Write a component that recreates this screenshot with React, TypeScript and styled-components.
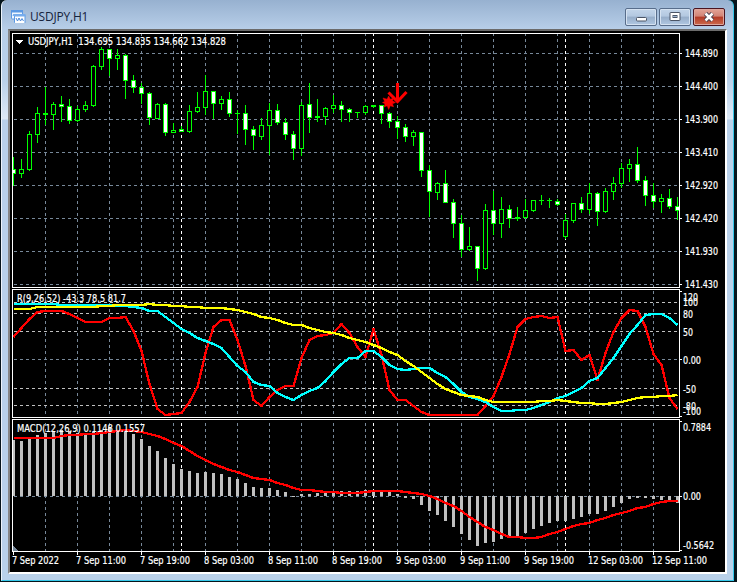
import React from "react";
import styled, { createGlobalStyle } from "styled-components";

const GlobalStyle = createGlobalStyle`
  * { box-sizing: border-box; }
  body { margin: 0; background: #000; overflow: hidden; }
`;

const UI_FONT = '"DejaVu Sans Condensed", "DejaVu Sans", sans-serif';

const Window = styled.div`
  width: 737px;
  height: 582px;
  display: flex;
  flex-direction: column;
  padding: 0 3px 1px 1px;
  background: #06151c;
`;

const Frame = styled.div`
  flex: 1;
  display: flex;
  flex-direction: column;
  padding: 0 6px 6px;
  border-left: 1px solid #eef4fb;
  border-right: 1px solid #35c8ea;
  border-bottom: 1px solid #35c8ea;
  border-radius: 6px 6px 0 0;
  background: linear-gradient(#97b1d0 0, #b7cee8 29px, #b9d1ea 80px, #dde9f6 119px, #b9d1ea 120px);
`;

const TitleBar = styled.header`
  height: 29px;
  display: flex;
  align-items: flex-start;
  padding: 8px 2px 0 3px;
`;

const Title = styled.h1`
  flex: 1;
  margin: 1px 0 0 4px;
  font: 400 12px/16px "Open Sans", "Noto Sans", sans-serif;
  letter-spacing: -0.2px;
  color: #16233c;
`;

const Buttons = styled.div`
  display: flex;
  gap: 2px;
`;

const WindowButton = styled.button<{ $close?: boolean }>`
  width: 32px;
  height: 18px;
  display: flex;
  align-items: center;
  justify-content: center;
  padding: 0;
  border-radius: 2px;
  border: 1px solid ${(p) => (p.$close ? "#4a1420" : "#586d8b")};
  box-shadow: inset 0 0 0 1px ${(p) => (p.$close ? "#dda69d" : "#d5e2f1")};
  background: ${(p) =>
    p.$close
      ? "linear-gradient(#e3a497 0, #d28476 45%, #b33a26 50%, #cc6a4d 100%)"
      : "linear-gradient(#c3d5ea 0, #b3c8e0 45%, #96adc9 50%, #b1c8e2 100%)"};
`;

const Client = styled.main`
  flex: 1;
  display: flex;
  flex-direction: column;
  background: #000;
  border: 2px solid;
  border-color: #6b6b6b #fff #fff #868686;
`;

const Pane = styled.svg<{ $h: number }>`
  display: block;
  width: 715px;
  height: ${(p) => p.$h}px;
  flex: none;
  overflow: visible;
  font-family: ${UI_FONT};
  font-size: 10.5px;
  fill: #fff;
`;

const Label = styled.text`
  stroke: #fff;
  stroke-width: 0.2px;
`;

const X0 = 13;
const STEP = 8;
const LIME = "#00ff00";
const SLATE = "#778899";
const SILVER = "#c0c0c0";
const barX = (i: number) => X0 + STEP * i;

type Kind = "w" | "h";
type Candle = [number, number, number, number, Kind];

/* high, low, body top, body bottom, white or hollow body */
const candles: Candle[] = [
  [157, 185, 169, 173, "w"], [159, 177, 169, 173, "h"], [131, 170, 134, 169, "h"], [107, 142, 113, 134, "h"],
  [87, 124, 113, 114, "h"], [102, 129, 104, 114, "h"], [96, 121, 104, 106, "w"], [99, 123, 106, 120, "w"],
  [106, 121, 109, 120, "h"], [101, 111, 105, 109, "h"], [65, 106, 66, 105, "h"], [47, 69, 49, 66, "h"],
  [49, 75, 49, 58, "w"], [49, 69, 55, 58, "h"], [54, 98, 55, 80, "w"], [75, 92, 80, 87, "w"],
  [83, 103, 87, 93, "w"], [92, 124, 93, 117, "w"], [103, 118, 104, 118, "h"], [103, 135, 104, 132, "w"],
  [123, 132, 130, 132, "h"], [126, 131, 129, 131, "w"], [105, 132, 111, 131, "h"], [92, 112, 107, 111, "h"],
  [75, 114, 91, 107, "h"], [91, 118, 91, 103, "w"], [96, 109, 99, 103, "h"], [92, 116, 99, 113, "w"],
  [110, 133, 113, 113, "h"], [105, 144, 113, 129, "w"], [126, 149, 129, 135, "w"], [118, 139, 125, 136, "h"],
  [103, 154, 110, 125, "h"], [104, 124, 110, 122, "w"], [118, 139, 122, 134, "w"], [131, 159, 134, 148, "w"],
  [102, 155, 105, 148, "h"], [83, 132, 104, 117, "w"], [99, 121, 116, 117, "h"], [107, 124, 108, 116, "h"],
  [95, 112, 105, 108, "h"], [101, 121, 105, 109, "w"], [108, 121, 109, 112, "w"], [112, 117, 112, 112, "h"],
  [105, 114, 106, 112, "h"], [105, 107, 105, 106, "h"], [105, 123, 105, 113, "w"], [112, 127, 113, 121, "w"],
  [116, 138, 121, 127, "w"], [124, 141, 127, 136, "w"], [130, 145, 132, 136, "h"], [132, 176, 132, 170, "w"],
  [165, 216, 170, 191, "w"], [182, 199, 183, 192, "h"], [170, 202, 183, 202, "w"], [199, 237, 202, 223, "w"],
  [215, 256, 223, 249, "w"], [227, 250, 246, 249, "h"], [246, 280, 246, 268, "w"], [204, 269, 210, 268, "h"],
  [191, 234, 210, 223, "w"], [197, 237, 209, 223, "h"], [205, 227, 209, 218, "w"], [207, 220, 217, 218, "h"],
  [199, 218, 210, 217, "h"], [200, 211, 200, 210, "h"], [195, 204, 200, 200, "h"], [198, 207, 200, 200, "h"],
  [199, 205, 201, 204, "w"], [214, 238, 220, 236, "h"], [203, 222, 203, 220, "h"], [197, 212, 203, 209, "w"],
  [183, 213, 193, 209, "h"], [192, 225, 193, 211, "w"], [188, 212, 191, 211, "h"], [177, 199, 183, 191, "h"],
  [163, 187, 168, 183, "h"], [159, 181, 164, 168, "h"], [147, 182, 164, 180, "w"], [176, 205, 180, 195, "w"],
  [183, 207, 195, 201, "w"], [194, 212, 198, 201, "h"], [189, 208, 198, 206, "w"], [197, 219, 206, 210, "w"],
];

/* indicator series, in thirds of a pixel below the origin of their pane */
const fast = [
  157, 130, 103, 80, 77, 77, 78, 88, 100, 110, 110, 110, 100, 98, 96, 137, 197, 297, 373, 389, 388, 384, 351, 306,
  203, 127, 106, 104, 165, 244, 344, 362, 337, 314, 303, 302, 220, 166, 153, 149, 145, 116, 144, 185, 215, 131, 210,
  314, 345, 345, 364, 382, 390, 390, 390, 390, 390, 390, 390, 362, 333, 277, 207, 127, 101, 95, 92, 98, 96, 197, 194,
  224, 209, 284, 203, 142, 98, 75, 78, 127, 208, 240, 340, 373,
];
const middle = [
  57, 57, 57, 57, 57, 57, 59, 60, 60, 60, 60, 60, 60, 62, 63, 65, 68, 77, 79, 95, 113, 131, 145, 159, 168, 177, 190,
  216, 243, 262, 291, 301, 304, 324, 337, 345, 331, 319, 308, 289, 262, 237, 218, 220, 198, 198, 216, 241, 251, 255,
  252, 249, 249, 263, 276, 297, 320, 337, 343, 351, 367, 377, 377, 375, 375, 370, 361, 351, 340, 334, 322, 309, 289,
  278, 249, 219, 183, 147, 120, 91, 87, 87, 99, 120,
];
const slow = [
  72, 72, 72, 67, 66, 66, 66, 66, 66, 66, 66, 64, 62, 61, 60, 59, 59, 58, 59, 61, 62, 63, 65, 67, 68, 69, 70, 73, 76,
  82, 88, 95, 98, 104, 114, 119, 121, 130, 136, 142, 145, 151, 160, 166, 172, 179, 188, 200, 211, 227, 244, 262, 280,
  297, 312, 321, 330, 334, 336, 345, 350, 350, 350, 350, 350, 350, 348, 347, 346, 348, 350, 353, 355, 356, 356, 355,
  352, 346, 340, 337, 335, 333, 333, 330,
];
const signal = [
  84, 84, 84, 84, 84, 83, 79, 76, 74, 73, 71, 68, 65, 62, 61, 62, 65, 71, 77, 86, 98, 108, 124, 139, 151, 163, 172,
  181, 187, 196, 203, 206, 211, 218, 224, 233, 239, 241, 244, 246, 246, 248, 248, 248, 246, 243, 242, 242, 244, 247,
  250, 253, 259, 268, 278, 289, 304, 320, 335, 350, 361, 371, 380, 382, 384, 383, 380, 371, 365, 358, 349, 343, 338,
  331, 325, 315, 310, 304, 295, 290, 283, 277, 274, 272,
];
const histogram = [
  90, 93, 85, 75, 69, 64, 60, 64, 70, 70, 65, 60, 52, 62, 66, 72, 87, 108, 123, 144, 162, 177, 183, 189, 186, 189,
  192, 201, 207, 219, 231, 234, 234, 240, 246, 261, 252, 252, 249, 249, 249, 243, 243, 243, 240, 240, 243, 246, 252,
  264, 267, 285, 303, 315, 333, 351, 372, 390, 408, 399, 396, 387, 378, 378, 369, 357, 348, 339, 333, 333, 327, 321,
  312, 312, 303, 291, 279, 267, 264, 264, 267, 270, 273, 279,
];

const gridX = Array.from({ length: 20 }, (_, k) => 45 + 32 * k);
const dayX = [181, 373, 565];
const priceLevels = [
  "144.890", "144.400", "143.900", "143.410", "142.920", "142.420", "141.930", "141.430",
].map((label, i) => ({ label, y: 53 + 33 * i }));
const rLevels = [302, 313, 331, 388, 405];
const rLabels = [
  { label: "120", y: 297, w: 15 }, { label: "100", y: 302, w: 15 }, { label: "80", y: 314, w: 10 },
  { label: "50", y: 332, w: 10 }, { label: "0.00", y: 360, w: 18 }, { label: "-50", y: 389, w: 13 },
  { label: "-80", y: 406, w: 13 }, { label: "-100", y: 411, w: 18 },
];
const dates = [
  "7 Sep 2022", "7 Sep 11:00", "7 Sep 19:00", "8 Sep 03:00", "8 Sep 11:00", "8 Sep 19:00",
  "9 Sep 03:00", "9 Sep 11:00", "9 Sep 19:00", "12 Sep 03:00", "12 Sep 11:00",
];

const HLine = ({ y, color }: { y: number; color: string }) => (
  <line x1={14} x2={679} y1={y + 0.5} y2={y + 0.5} stroke={color} strokeDasharray="3 3" />
);

const Verticals = ({ top, bottom }: { top: number; bottom: number }) => (
  <>
    {gridX.map((x) => (
      <line key={x} x1={x + 0.5} x2={x + 0.5} y1={top} y2={bottom} stroke={SLATE} strokeDasharray="3 3" strokeDashoffset={top - 33} />
    ))}
    {dayX.map((x) => (
      <line key={x} x1={x + 0.5} x2={x + 0.5} y1={top} y2={bottom} stroke="#fff" strokeDasharray="3 3" strokeDashoffset={top - 33} />
    ))}
  </>
);

const Border = ({ top, bottom }: { top: number; bottom: number }) => (
  <rect x={12.5} y={top + 0.5} width={667} height={bottom - top} fill="none" stroke="#fff" />
);

const Series = ({ data, origin, color }: { data: number[]; origin: number; color: string }) => (
  <polyline
    points={data.map((v, i) => `${Math.min(barX(i) + 0.5, 678)},${origin + Math.round(v / 3)}`).join(" ")}
    fill="none"
    stroke={color}
    strokeWidth={2.35}
    strokeLinejoin="round"
  />
);

const AxisLabel = ({ x, y, w, children }: { x: number; y: number; w: number; children: string }) => (
  <Label x={x} y={y + 4} textLength={w} lengthAdjust="spacingAndGlyphs">{children}</Label>
);

function CandleShape({ index, candle }: { index: number; candle: Candle }) {
  const [high, low, top, bottom, kind] = candle;
  const x = barX(index);
  const left = Math.max(x - 2, 13);
  const right = Math.min(x + 3, 679);
  const inner = Math.max(x - 1, 13);
  return (
    <g>
      <rect x={x} y={high} width={1} height={low - high + 1} fill={LIME} />
      <rect x={left} y={top} width={right - left} height={bottom - top + 1} fill={LIME} />
      {bottom - top > 1 && (
        <rect x={inner} y={top + 1} width={Math.min(x + 2, 679) - inner} height={bottom - top - 1} fill={kind === "w" ? "#fff" : "#000"} />
      )}
    </g>
  );
}

function PricePane() {
  return (
    <Pane $h={257} viewBox="10 31 715 257">
      <g shapeRendering="crispEdges">
        <Verticals top={34} bottom={287} />
        {priceLevels.map((l) => <HLine key={l.y} y={l.y} color={SLATE} />)}
        {candles.map((c, i) => <CandleShape key={i} index={i} candle={c} />)}
        <Border top={33} bottom={287} />
        {priceLevels.map((l) => <rect key={l.y} x={680} y={l.y} width={2} height={1} />)}
        <path d="M16 40h7l-3.5 4z" />
      </g>
      <path d="M397.500 83v19M388.500 92.500l9 9 9-9.500" fill="none" stroke="red" strokeWidth={3} />
      <path d="M388.700 96l1.500 3.200 3.300-1-1 2.600 3 1.700-3 1.300 1 3-3.300-1-1.500 3.700-1.500-3.700-3.200 1.200 1-3.200-2.500-1.300 2.200-1-1.700-3.500 4 1.200z" fill="red" stroke="red" strokeWidth={0.5} />
      <AxisLabel x={28} y={41} w={198}>USDJPY,H1&#160; 134.695 134.835 134.662 134.828</AxisLabel>
      {priceLevels.map((l) => <AxisLabel key={l.y} x={685} y={l.y} w={33}>{l.label}</AxisLabel>)}
    </Pane>
  );
}

function OscillatorPane() {
  return (
    <Pane $h={130} viewBox="10 288 715 130">
      <g shapeRendering="crispEdges">
        <Verticals top={290} bottom={417} />
        {rLevels.map((y) => <HLine key={y} y={y} color={SILVER} />)}
        <HLine y={359} color={SLATE} />
        <Series data={fast} origin={285} color="red" />
        <Series data={middle} origin={285} color="cyan" />
        <Series data={slow} origin={285} color="yellow" />
        <Border top={289} bottom={417} />
        {[291, 359, 416].map((y) => <rect key={y} x={680} y={y} width={2} height={1} />)}
      </g>
      <AxisLabel x={17} y={298} w={109}>R(9,26,52) -43.3 78.5 81.7</AxisLabel>
      {rLabels.map((l) => <AxisLabel key={l.label} x={683} y={l.y} w={l.w}>{l.label}</AxisLabel>)}
    </Pane>
  );
}

function MacdPane() {
  return (
    <Pane $h={154} viewBox="10 418 715 154">
      <g shapeRendering="crispEdges">
        <Verticals top={420} bottom={551} />
        <HLine y={496} color={SLATE} />
        {histogram.map((v, i) => {
          const y = 410 + Math.round(v / 3);
          const left = Math.max(barX(i) - 1, 13);
          return (
            <rect key={i} x={left} y={Math.min(y, 496)} width={Math.min(barX(i) + 2, 679) - left} height={Math.abs(496 - y)} fill={SILVER} />
          );
        })}
        <Series data={signal} origin={410} color="red" />
        <path d="M13 546l5 5h-5z" fill={SLATE} />
        <Border top={419} bottom={551} />
        {[421, 496, 550].map((y) => <rect key={y} x={680} y={y} width={2} height={1} />)}
        {dates.map((d, i) => <rect key={d} x={barX(i * 8)} y={552} width={1} height={3} />)}
      </g>
      <AxisLabel x={17} y={428} w={128}>MACD(12,26,9) 0.1148 0.1557</AxisLabel>
      <AxisLabel x={683} y={427} w={28}>0.7884</AxisLabel>
      <AxisLabel x={683} y={496} w={18}>0.00</AxisLabel>
      <AxisLabel x={683} y={545} w={31}>-0.5642</AxisLabel>
      {dates.map((d, i) => (
        <AxisLabel key={d} x={barX(i * 8) - 1} y={560} w={i === 0 ? 47 : i > 8 ? 55 : 50}>{d}</AxisLabel>
      ))}
    </Pane>
  );
}

const ChartIcon = () => (
  <svg width={15} height={15} viewBox="0 0 15 15">
    <rect x={0.5} y={2.500} width={11} height={8.500} rx={1} fill="#eef6ff" stroke="#5b99e4" />
    <rect x={0} y={2} width={12} height={2.500} fill="#5b99e4" />
    <path d="M2 8l1-2" stroke="#5b99e4" />
    <rect x={3.500} y={6.500} width={10.500} height={9} rx={1} fill="#fff" stroke="#5b99e4" />
    <rect x={3} y={6} width={11.500} height={2.500} fill="#76acec" />
    <path d="M5 10l1.500 3 1.500-3 1.500 3 1.500-2.500 1.500 2.500" fill="none" stroke="#4a88d8" />
  </svg>
);

export default function App() {
  return (
    <>
      <GlobalStyle />
      <Window>
        <Frame>
          <TitleBar>
            <ChartIcon />
            <Title>USDJPY,H1</Title>
            <Buttons>
              <WindowButton aria-label="Minimize">
                <svg width={12} height={10}><rect x={1.500} y={5.500} width={10} height={3.500} rx={1} fill="#fff" stroke="#4b5566" /></svg>
              </WindowButton>
              <WindowButton aria-label="Maximize">
                <svg width={12} height={10}><rect x={1} y={0.500} width={10} height={8} rx={0.500} fill="#fff" stroke="#4b5566" /><rect x={4} y={3.500} width={4} height={2} fill="#9db4d0" stroke="#4b5566" /></svg>
              </WindowButton>
              <WindowButton $close aria-label="Close">
                <svg width={12} height={10}><path d="M2.500 1.500l7 7m0-7l-7 7" stroke="#48414f" strokeWidth={4.500} /><path d="M2.500 1.500l7 7m0-7l-7 7" stroke="#fff" strokeWidth={2.500} /></svg>
              </WindowButton>
            </Buttons>
          </TitleBar>
          <Client>
            <PricePane />
            <OscillatorPane />
            <MacdPane />
          </Client>
        </Frame>
      </Window>
    </>
  );
}
